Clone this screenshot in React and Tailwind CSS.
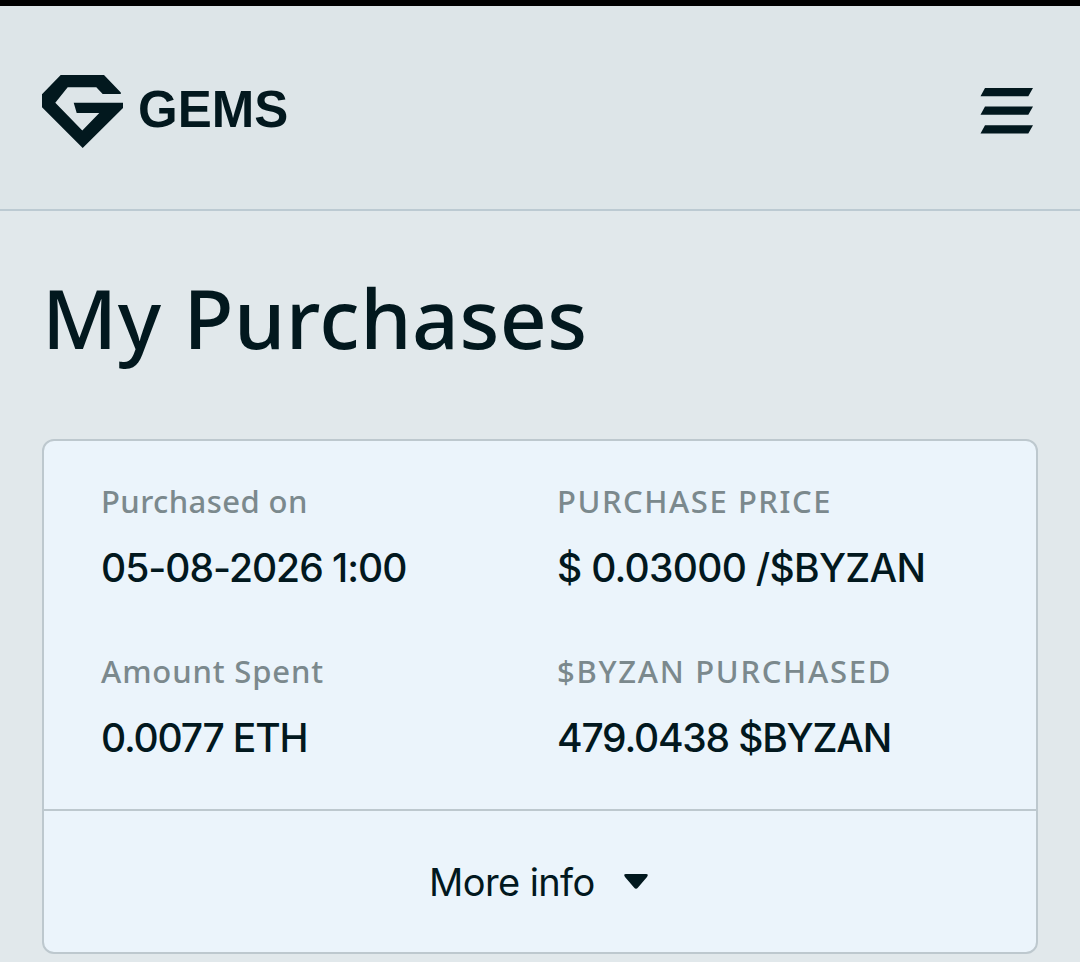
function Logo() {
  return (
    <svg className="block h-[74px] w-[82px]" viewBox="0 0 82 74" fill="#02181e" aria-hidden="true">
      <path d="M18.7 0H62L78.8 17.5V19H60.7L54.3 12.3H25.7L13.3 27.7L40.3 55.6L57.3 38H34.7L31.7 27.7H81V33L40.7 73L0 32.3V19.3Z" />
    </svg>
  );
}

function MenuIcon() {
  return (
    <svg className="block h-[46px] w-[53px]" viewBox="0 0 53 46" fill="#02181e" aria-hidden="true">
      <path d="M5 0H53L48.3 8.3H0.5ZM5 18.4H53L48.3 26.7H0.5ZM5 37.2H53L48.3 45.5H0.5Z" />
    </svg>
  );
}

function Field({ label, value, labelClass, valueClass }) {
  return (
    <div className="h-[170px] whitespace-nowrap">
      <div className={`h-10 font-['Noto_Sans',sans-serif] text-[31px] leading-10 font-medium text-[#7b898d] ${labelClass}`}>{label}</div>
      <div className={`mt-[23px] h-12 font-['Inter',sans-serif] text-[39px] leading-[48px] font-[450] text-[#02181e] ${valueClass}`}>{value}</div>
    </div>
  );
}

export default function App() {
  return (
    <div className="h-[962px] w-[1080px] overflow-hidden border-t-[6px] border-black bg-[#e1e8eb] text-[#02181e]">
      <header className="flex h-[205px] items-start justify-between border-b-2 border-[#bccad2] bg-[#dde5e8] pr-[47px] pl-[42px]">
        <div className="flex items-start pt-[69px]">
          <Logo />
          <span className="ml-[14px] pt-[5px] font-['Liberation_Sans',sans-serif] text-[51px] leading-[60px] font-bold">GEMS</span>
        </div>
        <button className="mt-[82px]" aria-label="Menu"><MenuIcon /></button>
      </header>
      <main className="px-[42px]">
        <h1 className="mt-[50px] h-[112px] font-['Noto_Sans',sans-serif] text-[82px] leading-[112px] font-medium tracking-[0.5px] whitespace-nowrap">My Purchases</h1>
        <section className="mt-[66px] h-[515px] rounded-xl border-2 border-[#bdc8ce] bg-[#ebf4fb]">
          <div className="grid h-[370px] grid-cols-[456px_1fr] border-b-2 border-[#bdc8ce] pt-[40px] pl-[57px]">
            <Field label="Purchased on" value="05-08-2026 1:00" labelClass="tracking-[0.42px]" valueClass="tracking-[-1px]" />
            <Field label="PURCHASE PRICE" value="$ 0.03000 /$BYZAN" labelClass="tracking-[1.55px]" valueClass="tracking-[-0.72px]" />
            <Field label="Amount Spent" value="0.0077 ETH" labelClass="tracking-[0.85px]" valueClass="tracking-[-1.2px]" />
            <Field label="$BYZAN PURCHASED" value="479.0438 $BYZAN" labelClass="tracking-[1.7px]" valueClass="tracking-[-1.2px]" />
          </div>
          <button className="flex h-[141px] w-full items-center pl-[385px]">
            <span className="mt-px h-12 w-[168px] text-left font-['Inter',sans-serif] text-[38px] leading-[48px] tracking-[-0.6px] whitespace-nowrap">More info</span>
            <svg className="ml-[27px] h-[15px] w-6" viewBox="0 0 24 15" fill="#02181e" aria-hidden="true">
              <path d="M2 0H22Q25 0 23 3L14 13.5Q12 16 10 13.5L1 3Q-1 0 2 0Z" />
            </svg>
          </button>
        </section>
      </main>
    </div>
  );
}
